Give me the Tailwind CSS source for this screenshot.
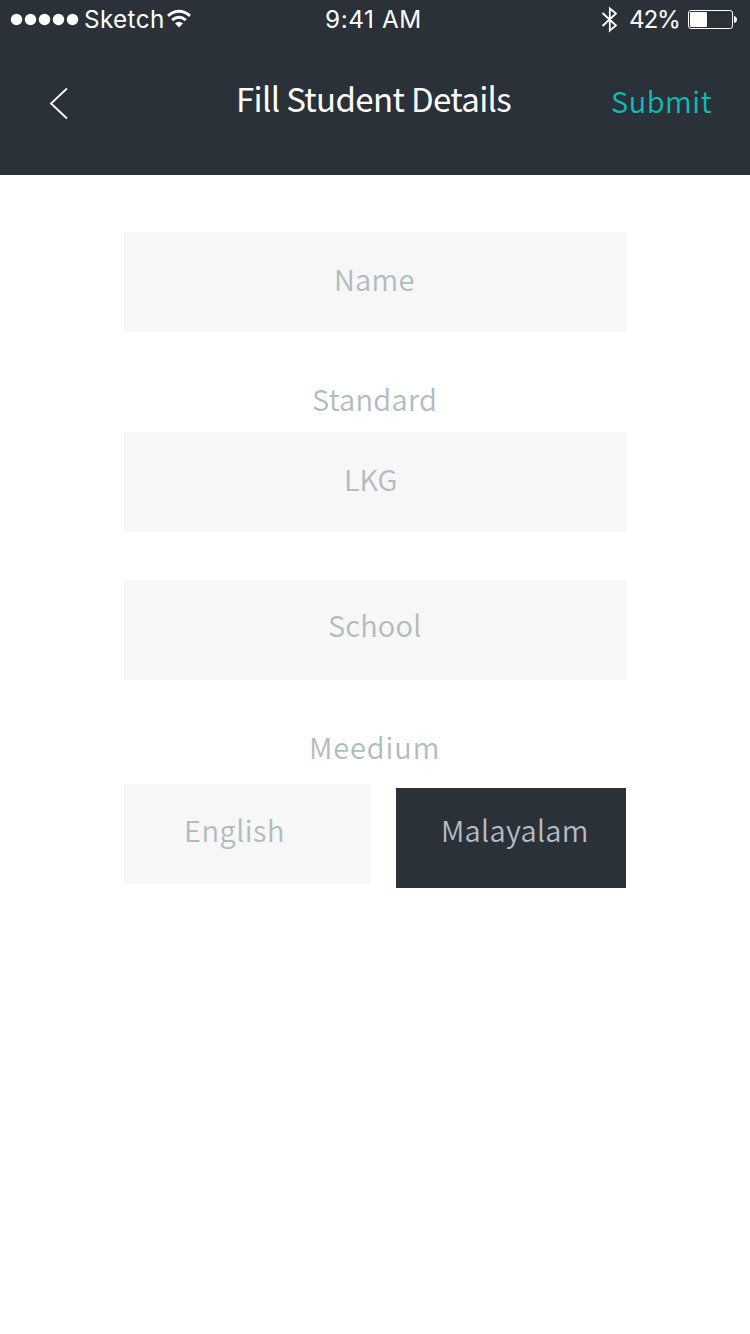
<!DOCTYPE html>
<html lang="en">
<head>
<meta charset="utf-8">
<title>Fill Student Details</title>
<script src="https://cdn.jsdelivr.net/npm/@tailwindcss/browser@4"></script>
</head>
<body class="w-[750px] h-[1334px] overflow-hidden bg-white font-['Noto_Sans_CJK_SC',sans-serif] font-[350] text-[29px] leading-[40px] text-[#b0bcc2] whitespace-nowrap">
<header class="h-[175px] bg-[#2b3139] text-white">
  <div class="flex h-[38px] font-['Inter',sans-serif] font-normal text-[24.3px] leading-[39px]">
    <svg class="w-[84px] h-[38px] shrink-0" viewBox="0 0 84 38" fill="#fff"><circle cx="16.5" cy="19.5" r="5.7"/><circle cx="30.5" cy="19.5" r="5.7"/><circle cx="44.5" cy="19.5" r="5.7"/><circle cx="58.5" cy="19.5" r="5.7"/><circle cx="72.5" cy="19.5" r="5.7"/></svg>
    <span class="w-[82px] tracking-[0.35px]">Sketch</span>
    <svg class="w-[26px] h-[38px] shrink-0" viewBox="166 0 26 38" fill="none" stroke="#fff" stroke-width="3"><path d="M168 15.8Q179 6.8 190 15.8M172.2 20.2Q179 14.4 185.8 20.2"/><path d="M175 23.3Q179 20.2 183 23.3L179 27.5Z" fill="#fff" stroke="none"/></svg>
    <span class="ml-[133px] w-[275px] tracking-[0.6px]">9:41 AM</span>
    <svg class="w-[20px] h-[38px] shrink-0" viewBox="600 0 20 38" fill="none" stroke="#fff" stroke-width="1.8"><path d="M602.5 13L616 25.5L609.8 30.5V8.5L616 13.5L602.5 26"/></svg>
    <span class="ml-[9px] w-[59px] tracking-[-1.2px]">42%</span>
    <svg class="w-[50px] h-[38px] shrink-0" viewBox="688 0 50 38"><rect x="688.5" y="10.5" width="44" height="18" rx="2.5" fill="none" stroke="#fff"/><rect x="690" y="12" width="17" height="15" rx="1" fill="#fff"/><path d="M734 16Q737 17 737 19.5T734 23Z" fill="#fff"/></svg>
  </div>
  <div class="flex pt-[40px]">
    <svg class="mt-[9px] ml-[48px] w-[22px] h-[34px] shrink-0" viewBox="48 87 22 34" fill="none" stroke="#fff" stroke-width="1.8"><path d="M67 88.5L51 103.5L67 118.5"/></svg>
    <h1 class="ml-[166px] w-[375px] text-[33px] leading-[40px] font-normal tracking-[-0.65px]">Fill Student Details</h1>
    <button class="mt-[1px] text-left tracking-[0.55px] text-[#0bbdb8]">Submit</button>
  </div>
</header>
<main class="pt-[57px] ml-[124px] w-[502px]">
  <div class="h-[100px] bg-[#f7f7f7] pt-[26px] pl-[210px] tracking-[0.3px]">Name</div>
  <div class="mt-[46px] mb-[14px] pl-[188px] tracking-[0.3px]">Standard</div>
  <div class="h-[100px] bg-[#f7f7f7] pt-[26px] pl-[220px]">LKG</div>
  <div class="mt-[48px] h-[100px] bg-[#f7f7f7] pt-[24px] pl-[204px] tracking-[0.2px]">School</div>
  <div class="mt-[46px] mb-[18px] pl-[185px] tracking-[0.9px]">Meedium</div>
  <div class="flex gap-[25px]">
    <div class="h-[100px] w-[247px] bg-[#f7f7f7] pt-[25px] pl-[60px] tracking-[0.5px]">English</div>
    <div class="mt-[4px] h-[100px] w-[230px] bg-[#2b3139] pt-[21px] pl-[45px] tracking-[0.3px] text-[#b4bcc6]">Malayalam</div>
  </div>
</main>
</body>
</html>
